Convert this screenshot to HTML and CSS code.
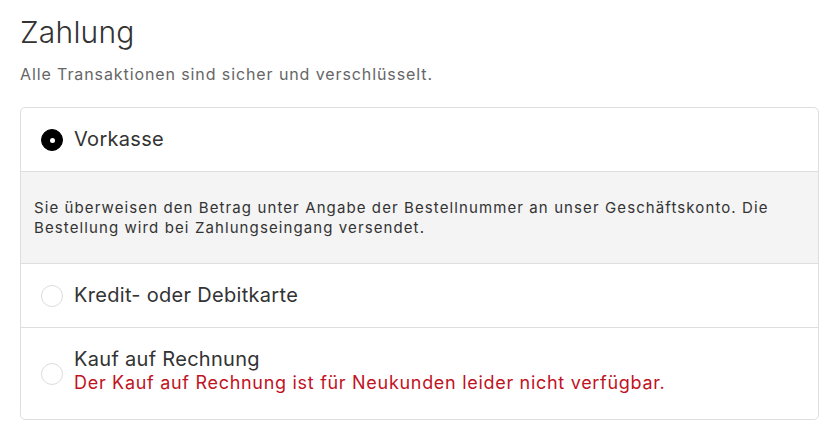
FILE: index.html
```html
<!DOCTYPE html>
<html lang="de">
<head>
    <meta charset="UTF-8">
    <meta name="viewport" content="width=device-width, initial-scale=1.0">
    <title>Zahlung</title>
    <link rel="stylesheet" href="styles.css">
</head>
<body>
    <div class="payment">
        <h1>Zahlung</h1>
        <p class="subtitle">Alle Transaktionen sind sicher und verschlüsselt.</p>

        <div class="methods">
            <label class="method">
                <span class="radio checked"></span>
                <span class="method-text">
                    <span class="method-name">Vorkasse</span>
                </span>
            </label>
            <div class="method-info">
                Sie überweisen den Betrag unter Angabe der Bestellnummer an unser Geschäftskonto. Die
                Bestellung wird bei Zahlungseingang versendet.
            </div>
            <label class="method">
                <span class="radio"></span>
                <span class="method-text">
                    <span class="method-name">Kredit- oder Debitkarte</span>
                </span>
            </label>
            <label class="method tall">
                <span class="radio"></span>
                <span class="method-text">
                    <span class="method-name">Kauf auf Rechnung</span>
                    <span class="method-note">Der Kauf auf Rechnung ist für Neukunden leider nicht verfügbar.</span>
                </span>
            </label>
        </div>
    </div>
</body>
</html>
```

FILE: styles.css
```css
body {
    font-family: Inter, "Noto Sans", sans-serif;
    background-color: #ffffff;
    color: #333333;
    margin: 0;
    padding: 0;
}
.payment {
    padding: 14px 15px 0 20px;
}
h1 {
    font-size: 30px;
    font-weight: 300;
    line-height: 36px;
    letter-spacing: 0.2px;
    margin: 0;
    color: #333;
}
.subtitle {
    font-size: 16px;
    line-height: 20px;
    letter-spacing: 0.9px;
    color: #666;
    margin: 14px 0 0;
}
.methods {
    margin-top: 23px;
    border: 1px solid #dedede;
    border-radius: 5px;
}
.method {
    display: flex;
    align-items: center;
    gap: 11px;
    padding: 0 20px;
    height: 63px;
    border-top: 1px solid #dedede;
    cursor: pointer;
}
.method:first-child {
    border-top: none;
}
.method.tall {
    height: 91px;
}
.method.tall .method-text {
    margin-bottom: 6px;
}
.radio {
    width: 20px;
    height: 20px;
    border: 1px solid #dcdcdc;
    border-radius: 50%;
    flex-shrink: 0;
    box-sizing: content-box;
    position: relative;
}
.radio.checked {
    background: #000;
    border-color: #000;
}
.radio.checked::after {
    content: "";
    position: absolute;
    left: 8px;
    top: 8px;
    width: 5px;
    height: 5px;
    border-radius: 50%;
    background: #fff;
}
.method-text {
    display: flex;
    flex-direction: column;
}
.method-name {
    font-size: 20px;
    line-height: 23px;
    letter-spacing: 0.3px;
    color: #333;
}
.method-note {
    font-size: 18px;
    line-height: 23px;
    letter-spacing: 0.7px;
    color: #c1121f;
}
.method-info {
    background: #f4f4f4;
    border-top: 1px solid #dedede;
    padding: 26px 13px 25px;
    font-size: 15px;
    line-height: 20px;
    letter-spacing: 1.1px;
    color: #333;
}
```
